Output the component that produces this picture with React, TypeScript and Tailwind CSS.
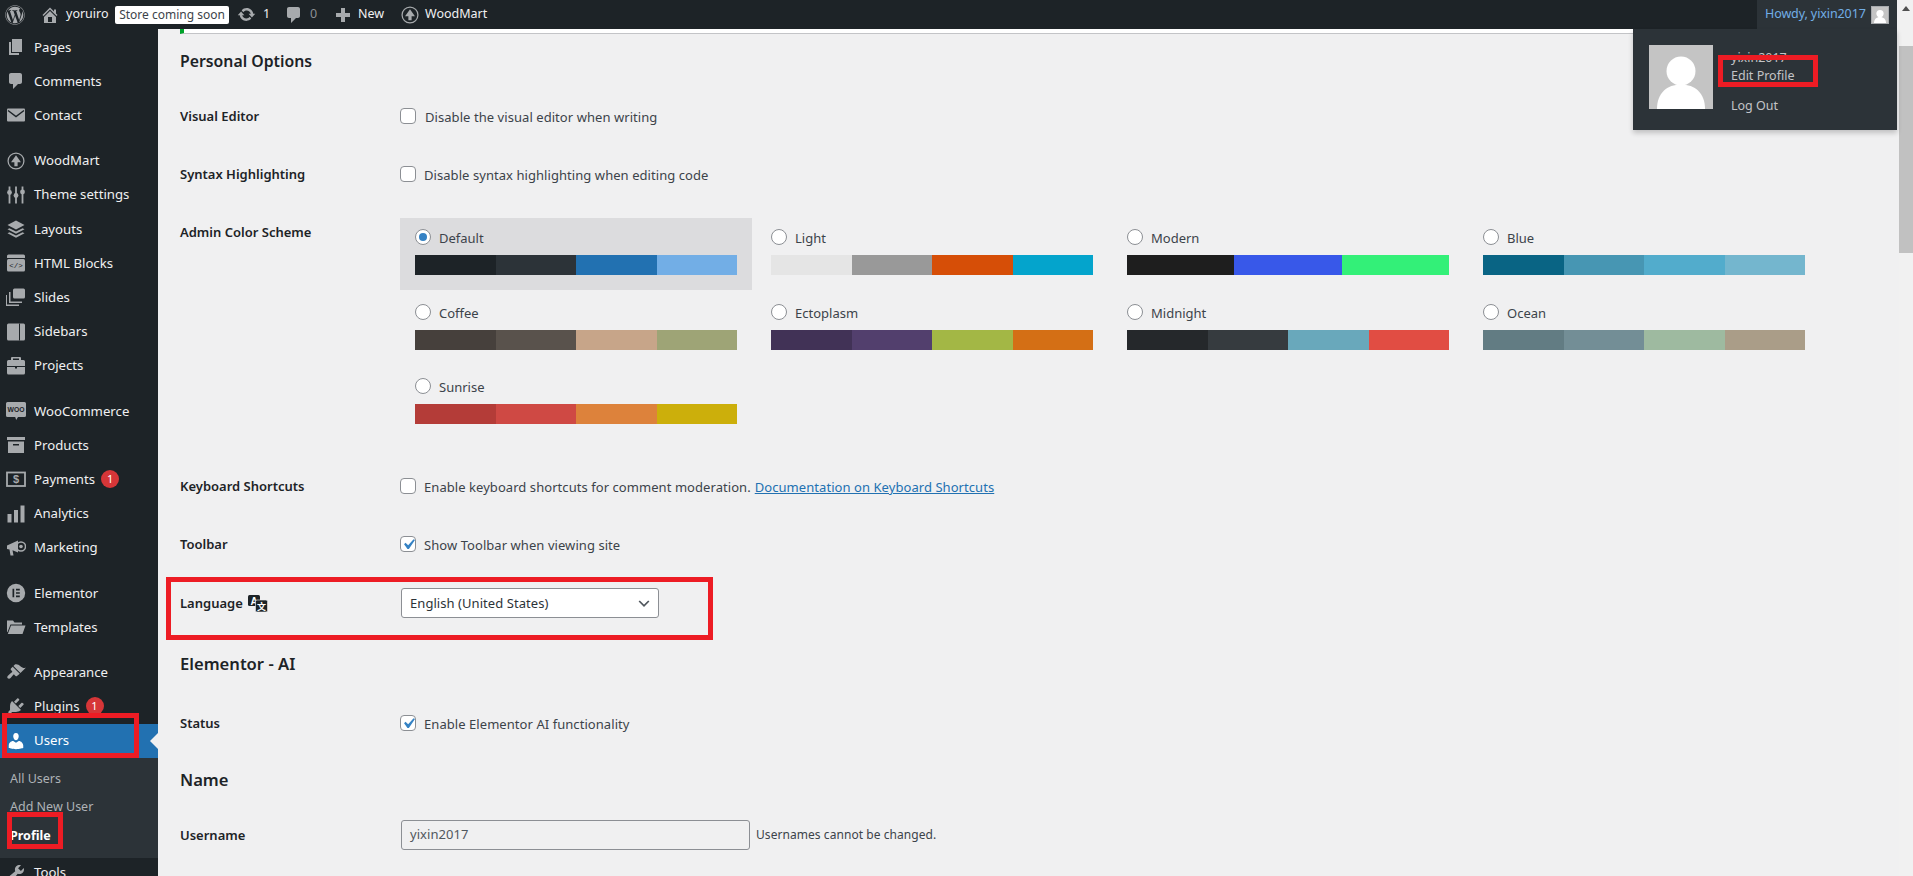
import { FaWordpress } from "react-icons/fa"
import type { ReactNode } from "react"

function Dash({ d, size = 20, className = "" }: { d: string; size?: number; className?: string }) {
  return (
    <svg viewBox="0 0 20 20" width={size} height={size} className={className} fill="currentColor">
      <path d={d} />
    </svg>
  )
}

function Svg({ children, size = 20 }: { children: ReactNode; size?: number }) {
  return (
    <svg viewBox="0 0 20 20" width={size} height={size} fill="currentColor">
      {children}
    </svg>
  )
}

const paths = {
  home: "M16 8.5l1.53 1.53-1.06 1.06L10 4.62l-6.47 6.47-1.06-1.06L10 2.5l4 4v-2h2v4zm-6-2.46l6 5.99V18H4v-5.97zM12 17v-5H8v5h4z",
  page: "M6 15V2h10v13H6zm-1 1h8v2H3V5h2v11z",
  comment: "M5 2h9c1.1 0 2 .9 2 2v7c0 1.1-.9 2-2 2h-2l-5 5v-5H5c-1.1 0-2-.9-2-2V4c0-1.1.9-2 2-2z",
  update: "M10.2 3.28c3.53 0 6.43 2.61 6.92 6h2.08l-3.5 4-3.5-4h2.32c-.45-1.97-2.21-3.45-4.32-3.45-1.45 0-2.73.71-3.54 1.78L4.95 5.66C6.23 4.2 8.11 3.28 10.2 3.28zm-.4 13.44c-3.52 0-6.43-2.61-6.92-6H.8l3.5-4c1.17 1.33 2.33 2.67 3.5 4H5.48c.45 1.97 2.21 3.45 4.32 3.45 1.45 0 2.73-.71 3.54-1.78l1.71 1.95c-1.28 1.46-3.15 2.38-5.25 2.38z",
  plugin: "M13.11 4.36L9.87 7.6 8 5.73l3.24-3.24c.35-.34 1.05-.2 1.56.32.52.51.66 1.21.31 1.55zm-8 1.77l.91-1.12 9.01 9.01-1.19.84c-.71.71-2.63 1.16-3.82 1.16H6.14L4.9 17.26c-.59.59-1.54.59-2.12 0-.59-.58-.59-1.53 0-2.12l1.24-1.24v-3.88c0-1.13.4-3.19 1.09-3.89zm7.26 3.97l3.24-3.24c.34-.35 1.04-.21 1.55.31.52.51.66 1.21.31 1.55l-3.24 3.25z",
  users: "M10 9.25c-2.27 0-2.73-3.44-2.73-3.44C7 4.02 7.82 2 9.97 2c2.16 0 2.98 2.02 2.71 3.81 0 0-.41 3.44-2.68 3.44zm0 2.57L12.72 10c2.39 0 4.52 2.33 4.52 4.53v2.49s-3.65 1.13-7.24 1.13c-3.65 0-7.24-1.13-7.24-1.13v-2.49c0-2.25 1.94-4.48 4.47-4.48z",
  tools: "M16.68 9.77c-1.34 1.34-3.3 1.67-4.95.99l-5.41 6.52c-.99.99-2.59.99-3.58 0s-.99-2.59 0-3.57l6.52-5.42c-.68-1.65-.35-3.61.99-4.95 1.28-1.28 3.12-1.62 4.72-1.06l-2.89 2.89 2.82 2.82 2.86-2.87c.53 1.58.18 3.39-1.08 4.65zM3.81 16.21c.4.39 1.04.39 1.43 0 .4-.4.4-1.04 0-1.43-.39-.4-1.03-.4-1.43 0-.39.39-.39 1.03 0 1.43z",
  brush: "M14.48 11.06L7.41 3.99l1.5-1.5c.5-.56 2.3-.47 3.51.32 1.21.8 1.43 1.28 2.91 2.1 1.18.64 2.45 1.26 4.45.85zm-.71.71L6.7 4.7 4.93 6.47c-.39.39-.39 1.02 0 1.41l1.06 1.06c.39.39.39 1.03 0 1.42-.6.6-1.43 1.11-2.21 1.69-.35.26-.7.53-1.01.84C1.43 13.71.96 15.12 1.5 15.97c.55.85 1.97 1.24 3.07.14.31-.31.58-.66.84-1.01.58-.78 1.09-1.61 1.69-2.21.39-.39 1.02-.39 1.41 0l1.06 1.06c.39.39 1.02.39 1.41 0z",
}

function WoodMartIcon({ size = 18 }: { size?: number }) {
  return (
    <svg viewBox="0 0 20 20" width={size} height={size} fill="currentColor">
      <circle cx="10" cy="10" r="8.8" fill="none" stroke="currentColor" strokeWidth="1.4" />
      <path d="M10 3.5l5.5 8h-3.7v4.300H8.200v-4.300H4.500z" />
    </svg>
  )
}

const menuIcons: Record<string, ReactNode> = {
  Pages: <Dash d={paths.page} />,
  Comments: <Dash d={paths.comment} />,
  Contact: (
    <Svg>
      <rect x="1" y="3.500" width="18" height="13" rx="1" />
      <path d="M2 5.500l8 6 8-6" fill="none" stroke="#1d2327" strokeWidth="1.400" />
    </Svg>
  ),
  WoodMart: <WoodMartIcon />,
  "Theme settings": (
    <Svg>
      <rect x="2.600" y="1.500" width="1.800" height="17" />
      <rect x="9.100" y="1.500" width="1.800" height="17" />
      <rect x="15.600" y="1.500" width="1.800" height="17" />
      <circle cx="3.500" cy="7.500" r="2.400" />
      <circle cx="10" cy="10.500" r="2.400" />
      <circle cx="16.500" cy="7" r="2.400" />
    </Svg>
  ),
  Layouts: (
    <Svg>
      <path d="M10 1.500l8.500 4.500-8.500 4.500L1.500 6z" />
      <path d="M3.500 9.200L1.500 10.300l8.500 4.500 8.500-4.500-2-1.100-6.500 3.400z" />
      <path d="M3.500 13.200l-2 1.100 8.500 4.500 8.500-4.500-2-1.100-6.500 3.400z" />
    </Svg>
  ),
  "HTML Blocks": (
    <Svg>
      <path d="M2.500 1.500h15a1.500 1.500 0 0 1 1.500 1.500v2H1V3a1.500 1.500 0 0 1 1.500-1.500z" />
      <rect x="1" y="6" width="18" height="12.500" rx="1.500" />
      <text x="10" y="15" fontSize="7.500" textAnchor="middle" fill="#1d2327" fontFamily="'Liberation Mono', monospace">{"</>"}</text>
    </Svg>
  ),
  Slides: (
    <Svg>
      <rect x="7" y="1.500" width="12" height="10" rx="1.500" />
      <path d="M4.500 5v9.500H16V16H3V5z" />
      <path d="M1 8v9.500h12V19H0V8z" />
    </Svg>
  ),
  Sidebars: (
    <Svg>
      <rect x="1" y="1.500" width="18" height="17" rx="1.500" />
      <rect x="13" y="1.500" width="1" height="17" fill="#1d2327" />
    </Svg>
  ),
  Projects: (
    <Svg>
      <path d="M7 4V2.500h6V4h2V2a1 1 0 0 0-1-1H6a1 1 0 0 0-1 1v2z" />
      <path d="M1 5.500A1.500 1.500 0 0 1 2.500 4h15A1.500 1.500 0 0 1 19 5.500V10H1z" />
      <path d="M1 11h8v1.500h2V11h8v6a1.500 1.500 0 0 1-1.500 1.500h-15A1.500 1.500 0 0 1 1 17z" />
    </Svg>
  ),
  WooCommerce: (
    <Svg>
      <path d="M1.500 1h17A1.500 1.500 0 0 1 20 2.500v12a1.500 1.500 0 0 1-1.500 1.500H12l-1.800 3-1-3H1.500A1.500 1.500 0 0 1 0 14.500v-12A1.500 1.500 0 0 1 1.500 1z" />
      <text x="10" y="11" fontSize="6.800" fontWeight="700" textAnchor="middle" fill="#1d2327" fontFamily="'Liberation Sans', sans-serif">WOO</text>
    </Svg>
  ),
  Products: (
    <Svg>
      <rect x="1" y="2" width="18" height="3" />
      <path d="M2 6.500h16V18H2zM7 9v1.500h6V9z" fillRule="evenodd" />
    </Svg>
  ),
  Payments: (
    <Svg>
      <rect x="1" y="3.500" width="18" height="13.500" fill="none" stroke="currentColor" strokeWidth="1.800" />
      <text x="10" y="14.300" fontSize="11" fontWeight="700" textAnchor="middle" fontFamily="'Liberation Sans', sans-serif">$</text>
    </Svg>
  ),
  Analytics: (
    <Svg>
      <rect x="1.500" y="10" width="4" height="8.500" />
      <rect x="8" y="6" width="4" height="12.500" />
      <rect x="14.500" y="1.500" width="4" height="17" />
    </Svg>
  ),
  Marketing: (
    <Svg>
      <path d="M1 7.500L12 2.500v12L6.500 12.200l1 5.300H4.500L3.500 11.500 1 11z" />
      <circle cx="15" cy="8.500" r="4.500" fill="none" stroke="currentColor" strokeWidth="1.500" />
      <circle cx="15" cy="8.500" r="1.800" />
    </Svg>
  ),
  Elementor: (
    <Svg>
      <path fillRule="evenodd" d="M10 .8a9.200 9.200 0 1 0 0 18.400A9.200 9.200 0 0 0 10 .8zM6.500 5.800h1.700v8.400H6.500zM10 5.800h3.800v1.700H10zm0 3.350h3.800v1.700H10zm0 3.350h3.800v1.700H10z" />
    </Svg>
  ),
  Templates: (
    <Svg>
      <path d="M1 3.500h6l1.500 2H16v2H4.500L1.500 15H1z" />
      <path d="M5 8.500h14.500L16.500 17H1.800z" />
    </Svg>
  ),
  Appearance: <Dash d={paths.brush} />,
  Plugins: <Dash d={paths.plugin} />,
  Users: <Dash d={paths.users} />,
  Tools: <Dash d={paths.tools} />,
}

type Item = { label: string; badge?: string; gap?: boolean }

const beforeUsers: Item[] = [
  { label: "Pages" },
  { label: "Comments" },
  { label: "Contact" },
  { label: "WoodMart", gap: true },
  { label: "Theme settings" },
  { label: "Layouts" },
  { label: "HTML Blocks" },
  { label: "Slides" },
  { label: "Sidebars" },
  { label: "Projects" },
  { label: "WooCommerce", gap: true },
  { label: "Products" },
  { label: "Payments", badge: "1" },
  { label: "Analytics" },
  { label: "Marketing" },
  { label: "Elementor", gap: true },
  { label: "Templates" },
  { label: "Appearance", gap: true },
  { label: "Plugins", badge: "1" },
]

function MenuRow({ item }: { item: Item }) {
  return (
    <div className={`flex h-[34.2px] shrink-0 items-center text-[#f0f0f1] ${item.gap ? "mt-[11px]" : ""}`}>
      <span className="flex w-[34px] justify-center pr-[3px] text-[#a7aaad]">{menuIcons[item.label]}</span>
      <span className="pt-px">{item.label}</span>
      {item.badge && (
        <span className="ml-[6px] flex h-[18px] w-[18px] items-center justify-center rounded-full bg-[#d63638] text-[11px] text-white">
          {item.badge}
        </span>
      )}
    </div>
  )
}

function Sidebar() {
  return (
    <aside className="flex w-[158px] shrink-0 flex-col overflow-hidden bg-[#1d2327] pt-px text-[13.2px]">
      {beforeUsers.map((item) => (
        <MenuRow key={item.label} item={item} />
      ))}
      <div className="relative flex h-[34px] shrink-0 items-center bg-[#2271b1] text-white">
        <span className="flex w-[34px] justify-center pr-[3px]">{menuIcons.Users}</span>
        <span>Users</span>
        <span className="absolute right-0 top-[9px] h-0 w-0 border-y-[8px] border-r-[8px] border-y-transparent border-r-[#f0f0f1]" />
      </div>
      <div className="flex h-[100px] shrink-0 flex-col bg-[#2c3338] pl-[10px] pt-[7px] text-[12.5px] leading-[28.5px] text-[#aeb2b6]">
        <span>All Users</span>
        <span>Add New User</span>
        <span className="font-bold text-white">Profile</span>
      </div>
      <div className="flex h-[19px] shrink-0 items-start text-[#f0f0f1]">
        <span className="flex w-[34px] justify-center pr-[3px] pt-[5px] text-[#a7aaad]">{menuIcons.Tools}</span>
        <span className="pt-[7px] leading-[14px]">Tools</span>
      </div>
    </aside>
  )
}

function TopBar() {
  return (
    <header className="mr-[2px] flex h-[29px] shrink-0 items-center whitespace-nowrap bg-[#1d2327] text-[12.5px] text-[#f0f0f1]">
      <FaWordpress className="ml-[5px] text-[#a7aaad]" size={20} />
      <span className="ml-[15px] text-[#a7aaad]"><Dash d={paths.home} /></span>
      <span className="ml-[6px] w-[41px]">yoruiro</span>
      <span className="ml-[8px] flex h-[18px] w-[114px] items-center justify-center rounded-[2px] bg-white text-[12px] text-[#3c434a]">Store coming soon</span>
      <span className="ml-[8px] text-[#a7aaad]"><Dash d={paths.update} size={19} /></span>
      <span className="ml-[7px] w-[7px]">1</span>
      <span className="ml-[14px] text-[#a7aaad]"><Dash d={paths.comment} /></span>
      <span className="ml-[6px] w-[8px] text-[#8c8f94]">0</span>
      <span className="ml-[15px] text-[#a7aaad]"><Dash d="M8 3h4v5h5v4h-5v5H8v-5H3V8h5z" /></span>
      <span className="ml-[5px] w-[27px]">New</span>
      <span className="ml-[16px] text-[#a7aaad]"><WoodMartIcon /></span>
      <span className="ml-[6px]">WoodMart</span>
      <div className="ml-auto flex h-full w-[140px] items-center bg-[#2c3338] pl-[8px] text-[#72aee6]">
        <span className="w-[106px] tracking-[-0.1px]">Howdy, yixin2017</span>
        <Avatar size={18} />
      </div>
    </header>
  )
}

function Avatar({ size }: { size: number }) {
  return (
    <svg viewBox="0 0 64 64" width={size} height={size} className={size < 30 ? "border border-[#a7aaad]" : ""}>
      <rect width="64" height="64" fill="#c4c4c4" />
      <circle cx="32" cy="26" r="14.500" fill="#fff" />
      <path d="M8 64c0-16 10-24.500 24-24.500S56 48 56 64z" fill="#fff" />
    </svg>
  )
}

function Checkbox({ checked = false }: { checked?: boolean }) {
  return (
    <span className="flex h-4 w-4 shrink-0 items-center justify-center rounded-[4px] border border-[#8c8f94] bg-white">
      {checked && (
        <svg viewBox="0 0 20 20" width="21" height="21" className="shrink-0">
          <path d="M14.830 4.890l1.340.940-5.810 8.380H9.020L5.780 9.670l1.340-1.250 2.570 2.400z" fill="#3582c4" />
        </svg>
      )}
    </span>
  )
}

function Radio({ checked = false }: { checked?: boolean }) {
  return (
    <span className="flex h-4 w-4 shrink-0 items-center justify-center rounded-full border border-[#8c8f94] bg-white">
      {checked && <span className="h-2 w-2 rounded-full bg-[#3582c4]" />}
    </span>
  )
}

function Row({ label, extra, height = "h-[58px]", children }: { label: string; extra?: ReactNode; height?: string; children: ReactNode }) {
  return (
    <div className={`flex shrink-0 items-center ${height}`}>
      <div className="flex w-[220px] shrink-0 items-center gap-[5px] text-[13px] font-semibold text-[#1d2327]">
        <span className="pt-[2px]">{label}</span>
        {extra}
      </div>
      <div className="flex items-center text-[13px] tracking-[0.06px] text-[#3c434a]">{children}</div>
    </div>
  )
}

function ControlText({ className = "ml-[8px]", children }: { className?: string; children: ReactNode }) {
  return <span className={`pt-[4px] ${className}`}>{children}</span>
}

const schemes = [
  { name: "Default", colors: ["#1d2327", "#2c3338", "#2271b1", "#72aee6"], selected: true },
  { name: "Light", colors: ["#e5e5e5", "#999999", "#d64e07", "#04a4cc"] },
  { name: "Modern", colors: ["#1e1e1e", "#3858e9", "#33f078"] },
  { name: "Blue", colors: ["#096484", "#4796b3", "#52accc", "#74b6ce"] },
  { name: "Coffee", colors: ["#46403c", "#59524c", "#c7a589", "#9ea476"] },
  { name: "Ectoplasm", colors: ["#413256", "#523f6d", "#a3b745", "#d46f15"] },
  { name: "Midnight", colors: ["#25282b", "#363b3f", "#69a8bb", "#e14d43"] },
  { name: "Ocean", colors: ["#627c83", "#738e96", "#9ebaa0", "#aa9d88"] },
  { name: "Sunrise", colors: ["#b43c38", "#cf4944", "#dd823b", "#ccaf0b"] },
]

function SchemeGrid() {
  return (
    <div className="grid w-[1424px] grid-cols-[repeat(4,356px)] content-start gap-y-[2.5px]">
      {schemes.map((s) => (
        <div key={s.name} className={`h-[72px] w-[352px] px-[15px] pt-[11px] ${s.selected ? "bg-[#dcdcde]" : ""}`}>
          <div className="flex h-4 items-center gap-[8px] text-[13px] text-[#3c434a]">
            <Radio checked={s.selected} />
            <span className="pt-[4px]">{s.name}</span>
          </div>
          <div className="mt-[10px] flex h-5">
            {s.colors.map((c) => (
              <span key={c} className="h-full flex-1" style={{ backgroundColor: c }} />
            ))}
          </div>
        </div>
      ))}
    </div>
  )
}

function LanguageIcon() {
  return (
    <svg viewBox="0 0 20 17" width="20" height="17">
      <rect x="0" y="0" width="12" height="11" rx="1.500" fill="#1d2327" />
      <text x="6" y="9.500" fontSize="10" fontWeight="700" textAnchor="middle" fill="#fff" fontFamily="'Liberation Sans', sans-serif">A</text>
      <rect x="7.500" y="5" width="12" height="12" rx="1.500" fill="#1d2327" stroke="#f0f0f1" strokeWidth="0.600" />
      <text x="13.500" y="15" fontSize="9" textAnchor="middle" fill="#fff" fontFamily="'Noto Sans CJK SC', sans-serif">文</text>
    </svg>
  )
}

function ProfileForm() {
  return (
    <main className="flex min-w-0 flex-1 flex-col overflow-hidden bg-[#f0f0f1] pl-[22px]">
      <div className="mr-[22px] h-[5px] shrink-0 border-b border-l-4 border-b-[#c3c4c7] border-l-[#00a32a] bg-white" />
      <h2 className="flex h-[53px] shrink-0 items-center pt-[2px] text-[15.8px] font-semibold text-[#1d2327]">Personal Options</h2>
      <Row label="Visual Editor">
        <Checkbox />
        <ControlText className="ml-[9px]">Disable the visual editor when writing</ControlText>
      </Row>
      <Row label="Syntax Highlighting">
        <Checkbox />
        <ControlText>Disable syntax highlighting when editing code</ControlText>
      </Row>
      <div className="flex h-[254px] shrink-0 pt-[15px]">
        <div className="w-[220px] shrink-0 text-[13px] font-semibold leading-[28px] text-[#1d2327]">Admin Color Scheme</div>
        <SchemeGrid />
      </div>
      <Row label="Keyboard Shortcuts">
        <Checkbox />
        <ControlText>Enable keyboard shortcuts for comment moderation.</ControlText>
        <a className="ml-[4px] pt-[4px] text-[#2271b1] underline">Documentation on Keyboard Shortcuts</a>
      </Row>
      <Row label="Toolbar">
        <Checkbox checked />
        <ControlText>Show Toolbar when viewing site</ControlText>
      </Row>
      <Row label="Language" height="h-[60px]" extra={<LanguageIcon />}>
        <div className="ml-px flex h-[30px] w-[258px] items-center justify-between rounded-[3px] border border-[#8c8f94] bg-white pl-[8px] pr-[6px] text-[#2c3338]">
          <span className="pt-[2px]">English (United States)</span>
          <svg viewBox="0 0 20 20" width="16" height="16" fill="none" stroke="#50575e" strokeWidth="2.200">
            <path d="M4 7.500l6 6 6-6" />
          </svg>
        </div>
      </Row>
      <h2 className="flex h-[61px] shrink-0 items-center pt-[2px] text-[16.6px] font-semibold text-[#1d2327]">Elementor - AI</h2>
      <Row label="Status">
        <Checkbox checked />
        <ControlText>Enable Elementor AI functionality</ControlText>
      </Row>
      <h2 className="flex h-[54px] shrink-0 items-center pt-[2px] text-[16.6px] font-semibold text-[#1d2327]">Name</h2>
      <Row label="Username">
        <div className="ml-px flex h-[30px] w-[349px] items-center rounded-[3px] border border-[#8c8f94] bg-[#f0f0f1] pl-[8px] text-[#50575e]">yixin2017</div>
        <span className="ml-[6px] text-[12px] text-[#3c434a]">Usernames cannot be changed.</span>
      </Row>
    </main>
  )
}

function AccountMenu() {
  return (
    <div className="absolute left-[1633px] top-[29px] flex h-[101px] w-[264px] bg-[#2c3338] pl-[16px] pt-[16px] text-[12.5px] text-[#c3c4c7] shadow-[0_3px_5px_rgba(0,0,0,0.2)]">
      <Avatar size={64} />
      <div className="ml-[18px] flex flex-col leading-[18px]">
        <span className="mt-[4px]">yixin2017</span>
        <span>Edit Profile</span>
        <span className="mt-[12px]">Log Out</span>
      </div>
    </div>
  )
}

// hand drawn red marks from the annotated screenshot
function Marks() {
  return (
    <>
      <div className="absolute left-[1718px] top-[55px] h-[32px] w-[100px] border-[5px] border-[#ed1c24]" />
      <div className="absolute left-[166px] top-[577px] h-[63px] w-[547px] border-[5px] border-[#ed1c24]" />
      <div className="absolute left-[2px] top-[713px] h-[45px] w-[137px] border-[5px] border-[#ed1c24]" />
      <div className="absolute left-[7px] top-[812px] h-[37px] w-[56px] border-[5px] border-[#ed1c24]" />
    </>
  )
}

function Scrollbar() {
  return (
    <div className="flex w-[14px] shrink-0 flex-col items-center bg-[#f1f1f1]">
      <span className="mt-[6px] h-0 w-0 border-x-[4px] border-b-[5px] border-x-transparent border-b-[#505050]" />
      <span className="mt-[35px] h-[207px] w-full bg-[#c1c1c1]" />
    </div>
  )
}

export default function App() {
  return (
    <div className="relative flex h-[876px] w-[1913px] overflow-hidden font-['Noto_Sans',sans-serif] text-[13px]">
      <div className="flex w-[1899px] shrink-0 flex-col bg-[#f0f0f1]">
        <TopBar />
        <div className="flex min-h-0 flex-1">
          <Sidebar />
          <ProfileForm />
        </div>
      </div>
      <Scrollbar />
      <AccountMenu />
      <Marks />
    </div>
  )
}
